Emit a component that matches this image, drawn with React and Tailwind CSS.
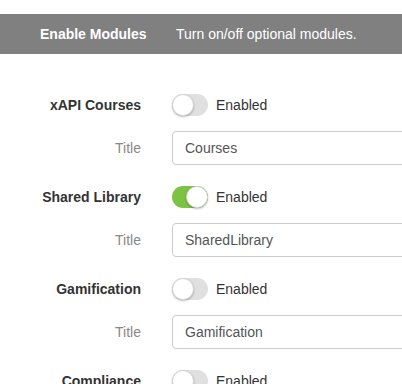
const modules = [
  { label: "xAPI Courses", title: "Courses", on: false },
  { label: "Shared Library", title: "SharedLibrary", on: true },
  { label: "Gamification", title: "Gamification", on: false },
  { label: "Compliance", title: "Compliance", on: false },
];

const Toggle = ({ on }) => (
  <div
    className={`relative w-[36px] h-[22px] rounded-full ${
      on ? "bg-[#7cc243]" : "bg-[#e0e0e0]"
    }`}
  >
    <div
      className={`absolute top-0 ${
        on ? "left-[14px]" : "left-0"
      } w-[22px] h-[22px] rounded-full bg-white border border-[#d6d6d6] shadow-[0_1px_2px_rgba(0,0,0,0.25)]`}
    ></div>
  </div>
);

const App = () => {
  return (
    <div
      className="w-[402px] h-[384px] overflow-hidden bg-white text-[14px] text-[#333]"
      style={{ fontFamily: '"Liberation Sans", Arial, sans-serif' }}
    >
      <div className="h-[14px]"></div>

      {/* Header */}
      <div className="flex items-center h-[40px] bg-[#808080] text-white">
        <div className="w-[176px] shrink-0 pl-[40px] font-bold">Enable Modules</div>
        <div>Turn on/off optional modules.</div>
      </div>

      {/* Modules */}
      <div className="pt-[34px]">
        {modules.map((m) => (
          <div key={m.label} className="mb-[15px]">
            <div className="flex items-center h-[34px]">
              <div className="w-[141px] shrink-0 text-right font-bold text-[#333]">
                {m.label}
              </div>
              <div className="ml-[31px] flex items-center gap-[8px]">
                <Toggle on={m.on} />
                <span className="text-[#333]">Enabled</span>
              </div>
            </div>
            <div className="flex items-center mt-[9px]">
              <div className="w-[141px] shrink-0 text-right text-[#888]">Title</div>
              <div className="ml-[31px] shrink-0 w-[300px] h-[34px] flex items-center px-[12px] border border-[#ccc] rounded-[4px] text-[#555]">
                {m.title}
              </div>
            </div>
          </div>
        ))}
      </div>
    </div>
  );
};

export default App;
